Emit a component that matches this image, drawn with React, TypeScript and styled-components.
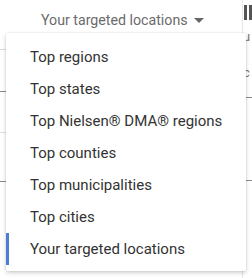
import React from "react";
import styled, { createGlobalStyle } from "styled-components";

const GlobalStyle = createGlobalStyle`
  body {
    margin: 0;
    background: #ffffff;
    font-family: Roboto, "Liberation Sans", Arial, sans-serif;
  }
`;

const Page = styled.div`
  position: relative;
  width: 252px;
  height: 278px;
  overflow: hidden;
  display: flex;
`;

const Main = styled.div`
  width: 243px;
  display: flex;
  flex-direction: column;
`;

const HeaderRow = styled.div`
  height: 39px;
  padding-bottom: 10px;
  display: flex;
  align-items: center;
  padding-left: 41px;
  gap: 6px;
  color: #6b6b6b;
  font-size: 14.2px;
  border-bottom: 1px solid #dadada;
`;

const Caret = styled.span`
  width: 0;
  height: 0;
  border-left: 5px solid transparent;
  border-right: 5px solid transparent;
  border-top: 5px solid #666666;
  margin-top: 2px;
`;

const Row = styled.div<{ $h: number; $dark?: boolean }>`
  height: ${(p) => p.$h}px;
  border-bottom: 1px solid ${(p) => (p.$dark ? "#8a8a8a" : "#e0e0e0")};
`;

const Side = styled.div`
  flex: 1;
  border-left: 1px solid #e6e6e6;
  display: flex;
  flex-direction: column;
  padding-top: 5px;
`;

const ColIcon = styled.div`
  display: flex;
  gap: 2px;
  height: 15px;
  margin-left: 1px;
  div {
    width: 3px;
    background: #555555;
  }
`;

const SideText = styled.div<{ $top: number }>`
  margin-top: ${(p) => p.$top}px;
  font-size: 13px;
  color: #777777;
  line-height: 14px;
  height: 14px;
`;

const SideLine = styled.div<{ $top: number }>`
  margin-top: ${(p) => p.$top}px;
  height: 1px;
  background: #8a8a8a;
`;

const Menu = styled.ul`
  position: absolute;
  left: 6px;
  top: 33px;
  width: 240px;
  margin: 0;
  padding: 8px 0 6px;
  list-style: none;
  background: #ffffff;
  border-radius: 2px;
  box-shadow: 0 2px 4px rgba(0, 0, 0, 0.18), 0 0 2px rgba(0, 0, 0, 0.12);
`;

const Item = styled.li<{ $selected?: boolean }>`
  position: relative;
  height: 32px;
  display: flex;
  align-items: center;
  padding-left: 24px;
  font-size: 15px;
  color: #333333;
  white-space: nowrap;
  &::before {
    content: "";
    position: absolute;
    left: 0;
    top: 0;
    bottom: 0;
    width: 3px;
    background: ${(p) => (p.$selected ? "#4a7fd4" : "transparent")};
  }
`;

const options = [
  "Top regions",
  "Top states",
  "Top Nielsen® DMA® regions",
  "Top counties",
  "Top municipalities",
  "Top cities",
  "Your targeted locations",
];

export default function App() {
  const selected = "Your targeted locations";
  return (
    <>
      <GlobalStyle />
      <Page>
        <Main>
          <HeaderRow>
            Your targeted locations
            <Caret />
          </HeaderRow>
          <Row $h={41} $dark />
          <Row $h={40} />
          <Row $h={48} $dark />
        </Main>
        <Side>
          <ColIcon>
            <div />
            <div />
          </ColIcon>
          <SideText $top={10}>u</SideText>
          <SideText $top={22}>c</SideText>
          <SideLine $top={17} />
          <SideText $top={55}>:</SideText>
          <SideLine $top={13} />
        </Side>
        <Menu>
          {options.map((o) => (
            <Item key={o} $selected={o === selected}>
              {o}
            </Item>
          ))}
        </Menu>
      </Page>
    </>
  );
}
